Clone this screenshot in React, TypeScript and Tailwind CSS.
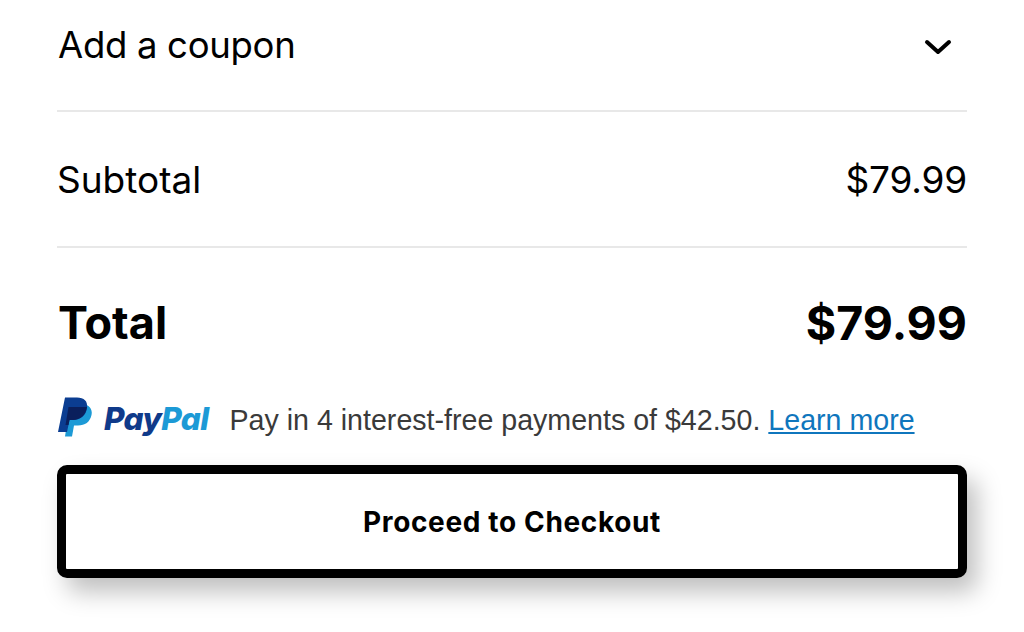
export default function App() {
  return (
    <div className="w-[1024px] h-[632px] overflow-hidden bg-white px-[57px] text-black font-['Inter','Liberation_Sans',sans-serif]">
      <div className="h-[112px] border-b-2 border-[#e8e8e8] flex items-center justify-between pl-px pr-[15px] pb-[20px]">
        <span className="text-[36.5px] leading-[44px] tracking-[-0.3px]">Add a coupon</span>
        <svg width="28" height="18" viewBox="0 0 28 18" fill="none" className="mt-[3px]">
          <path d="M3 4 L14 14 L25 4" stroke="#000" strokeWidth="4" strokeLinecap="round" strokeLinejoin="round" />
        </svg>
      </div>
      <div className="h-[136px] border-b-2 border-[#e8e8e8] flex items-center justify-between pt-[2px]">
        <span className="text-[37px] leading-[44px]">Subtotal</span>
        <span className="text-[37px] leading-[44px] tracking-[-0.2px]">$79.99</span>
      </div>
      <div className="h-[150px] flex items-center justify-between pl-px font-bold">
        <span className="text-[45px] leading-[56px]">Total</span>
        <span className="text-[46.5px] leading-[56px]">$79.99</span>
      </div>
      <div className="h-[69px] -mt-[2px] pl-px pb-[22px] flex items-center">
        <svg width="34" height="40" viewBox="0 0 34 40" className="shrink-0 -mt-[6px]">
          <path d="M12 7 H23 C30 7 35 11 33.5 18 C32 25 27 28.5 20 28.5 H16 L14 39.5 H7 Z" fill="#1c9ad6" />
          <path d="M7 0.5 H19 C26 0.5 30 4 29 11 C28 19 22 23 15 23 H11.5 L9 35 H0 Z" fill="#0b3d91" />
          <path d="M10.5 10 H29 C28 18 22 23 15 23 H11.5 L10.5 28 H7.5 Z" fill="#0a1f5c" />
        </svg>
        <span className="ml-[12px] mt-[-2px] text-[31.4px] leading-[40px] font-extrabold italic tracking-[-0.6px]">
          <span className="text-[#0f3a8a]">Pay</span>
          <span className="text-[#1c9ad6]">Pal</span>
        </span>
        <span className="ml-[21px] text-[28.6px] leading-[36px] text-[#3a3a3a] font-['Liberation_Sans',sans-serif] whitespace-nowrap">
          Pay in 4 interest-free payments of $42.50. <span className="text-[#0f76bd] underline">Learn more</span>
        </span>
      </div>
      <button className="w-[910px] h-[113px] bg-white border-[9px] border-black rounded-[10px] shadow-[10px_14px_24px_rgba(0,0,0,0.25)] flex items-center justify-center">
        <span className="text-[28px] font-bold tracking-[0.65px]">Proceed to Checkout</span>
      </button>
    </div>
  );
}
